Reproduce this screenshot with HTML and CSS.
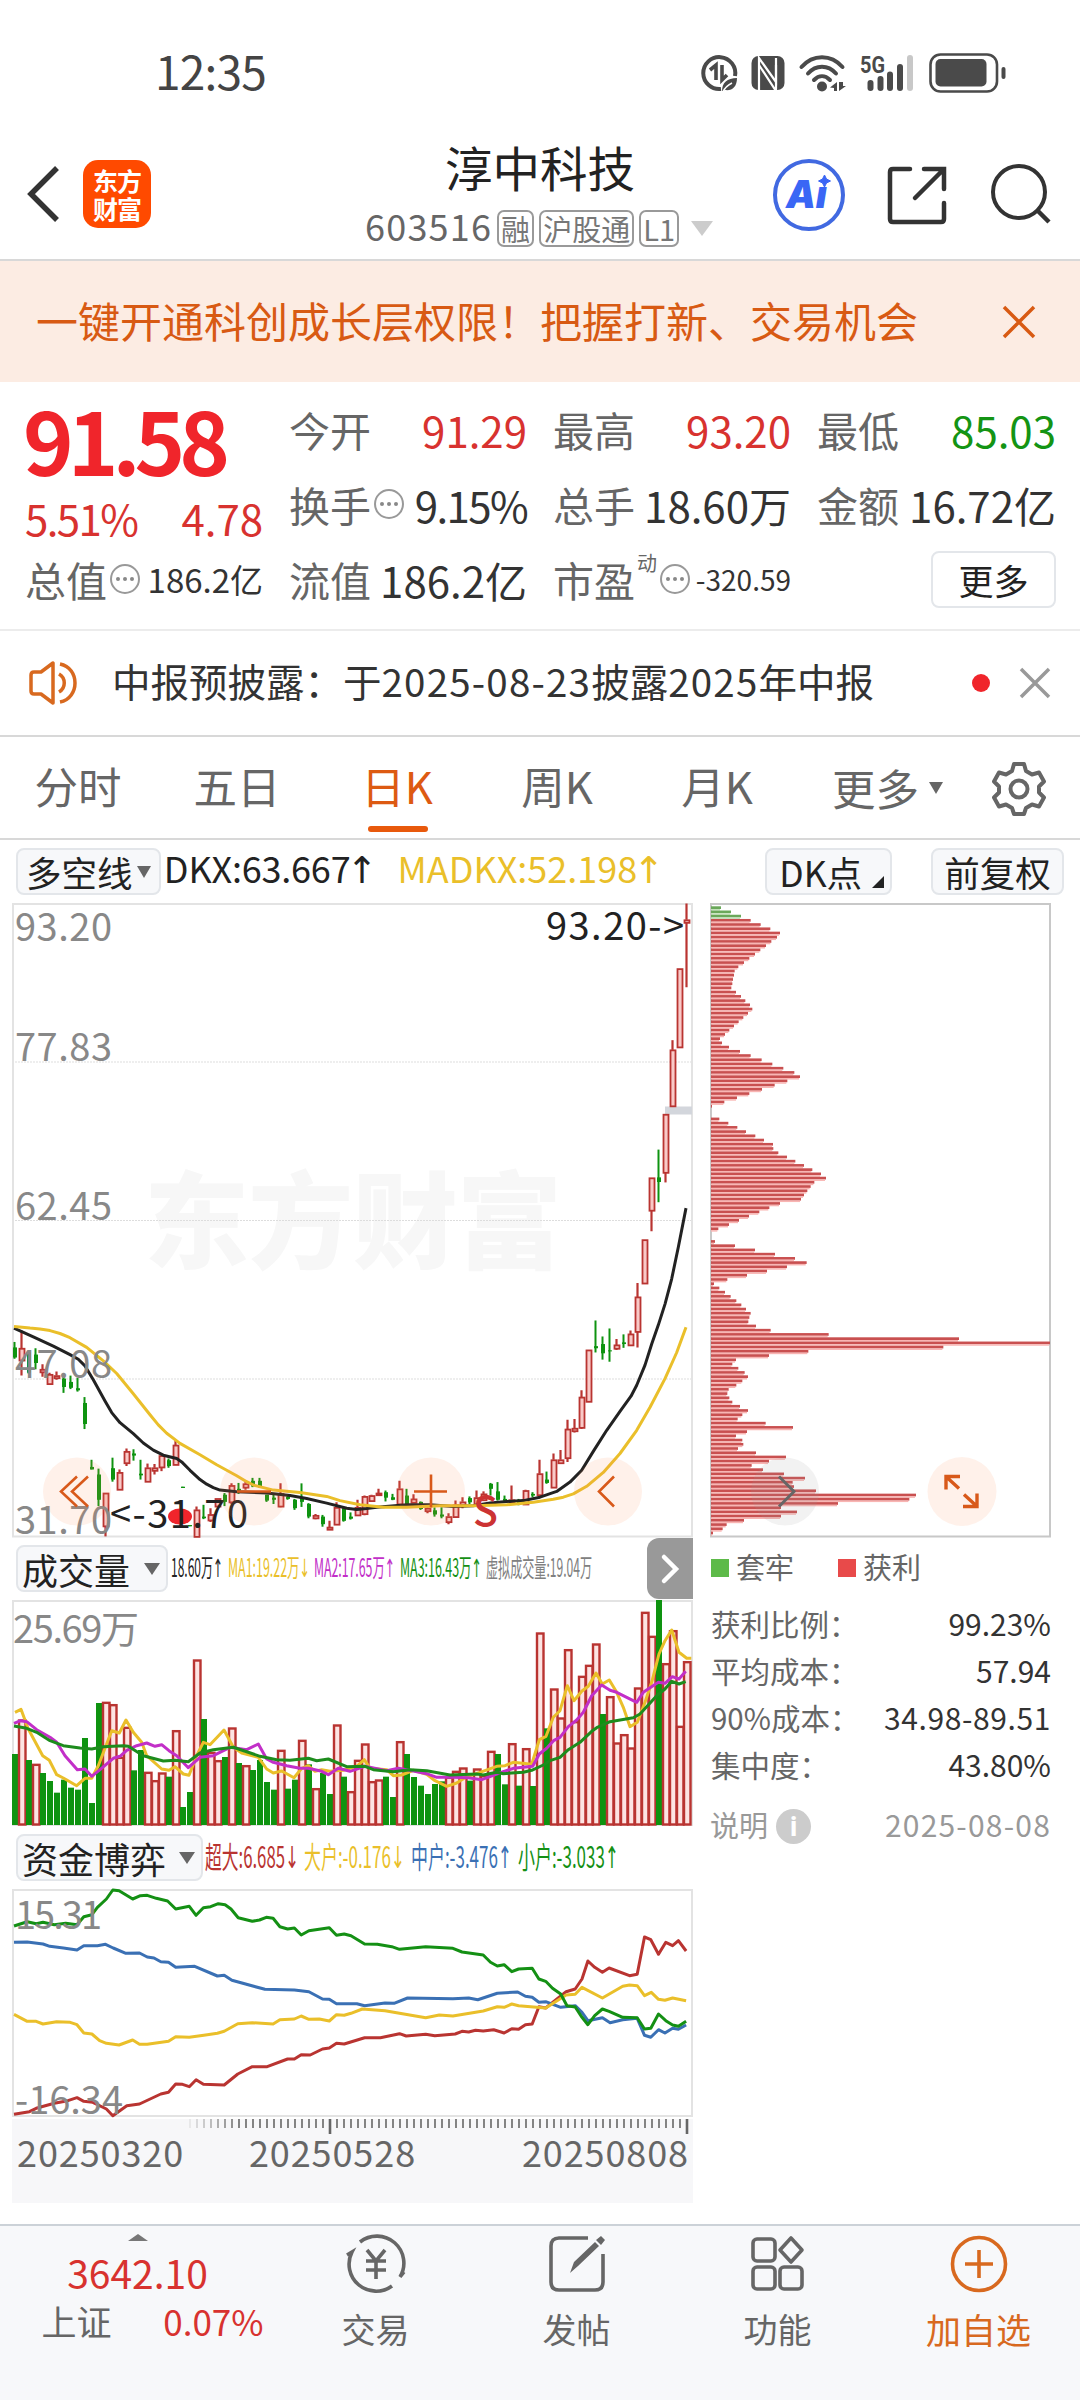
FILE: index.html
```html
<!DOCTYPE html>
<html lang="zh-CN">

<head>
    <meta charset="utf-8">
    <meta name="viewport" content="width=device-width, initial-scale=1.0">
    <title>淳中科技 603516</title>
    <link rel="stylesheet" href="styles.css">
</head>

<body>
    <div class="statusbar">
        <span class="clock">12:35</span>
        <div class="status-icons">
            <svg class="ico-data" width="37" height="37" viewBox="0 0 37 37">
                <path d="M34 21A16 16 0 1 0 20 34" fill="none" stroke="#4a4a4a" stroke-width="4" />
                <path d="M9 15l6-5v15M21 10v15l5-5" fill="none" stroke="#4a4a4a" stroke-width="3.600" />
                <path d="M21 36c0-8 5-13 15-13 0 9-5 13-12 12z" fill="#4a4a4a" />
                <path d="M22 37c2-5 5-7 9-9" fill="none" stroke="#fff" stroke-width="1.600" />
            </svg>
            <svg class="ico-nfc" width="34" height="36" viewBox="0 0 34 36">
                <rect x="0.500" y="1" width="33" height="34" rx="7" fill="#4a4a4a" />
                <path d="M8 35V3l17 24V10" fill="none" stroke="#fff" stroke-width="2.200" />
                <path d="M8 10l17 26V3" fill="none" stroke="#fff" stroke-width="2.200" />
            </svg>
            <svg class="ico-wifi" width="47" height="38" viewBox="0 0 47 38">
                <g fill="none" stroke="#4a4a4a" stroke-width="4" stroke-linecap="round">
                    <path d="M2.500 13C14 0 32 0 43.500 13" />
                    <path d="M9 19.500c8-9 20-9 28 0" />
                    <path d="M15 26c5-5 11-5 16 0" />
                </g>
                <circle cx="23" cy="32.500" r="5" fill="#4a4a4a" />
                <path d="M31 33.500l7-5.500v9h-3v-3zM40 28v9l7-5h-3v-4z" fill="#4a4a4a" />
            </svg>
            <svg class="ico-signal" width="56" height="38" viewBox="0 0 56 38">
                <text class="net" x="0" y="19" textLength="25" lengthAdjust="spacingAndGlyphs">5G</text>
                <g fill="#4a4a4a">
                    <rect x="7.500" y="26" width="6" height="11" rx="3" />
                    <rect x="17.500" y="22" width="6" height="15" rx="3" />
                    <rect x="27" y="17.500" width="6" height="19.500" rx="3" />
                    <rect x="37" y="10" width="6" height="27" rx="3" />
                    <rect x="47" y="1" width="6" height="36" rx="3" fill="#c8c8c8" />
                </g>
            </svg>
            <svg class="ico-battery" width="78" height="40" viewBox="0 0 78 40">
                <rect x="1.500" y="1.500" width="66.500" height="37" rx="10" fill="none" stroke="#4a4a4a" stroke-width="2.600" />
                <rect x="6.500" y="6" width="51" height="27.500" rx="5" fill="#4a4a4a" />
                <rect x="72.500" y="14" width="4" height="12" rx="2" fill="#4a4a4a" />
            </svg>
        </div>
    </div>

    <header class="header">
        <svg class="back" width="36" height="60" viewBox="0 0 36 60">
            <path d="M32 4L6 30l26 26" fill="none" stroke="#333" stroke-width="5.500" />
        </svg>
        <div class="logo"><span>东方</span><span>财富</span></div>
        <div class="title">
            <h1>淳中科技</h1>
            <div class="code">
                <span class="num">603516</span>
                <span class="tag">融</span>
                <span class="tag">沪股通</span>
                <span class="tag">L1</span>
                <i class="tri-down"></i>
            </div>
        </div>
        <svg class="ai" width="74" height="74" viewBox="0 0 74 74">
            <circle cx="37" cy="37" r="34" fill="none" stroke="#4169e1" stroke-width="4" />
            <text class="ai-text" x="14" y="50" textLength="41" lengthAdjust="spacingAndGlyphs">Aı</text>
            <path d="M52.500 17l2 4 4 2-4 2-2 4-2-4-4-2 4-2z" fill="#3a66f5" stroke="#3a66f5" />
        </svg>
        <svg class="share" width="60" height="60" viewBox="0 0 60 60">
            <path d="M23 4H6q-3 0-3 3v47q0 3 3 3h48q3 0 3-3V38M37 4h20v20M56 5L28 33" fill="none" stroke="#333" stroke-width="4.500" stroke-linecap="round" />
        </svg>
        <svg class="search" width="62" height="62" viewBox="0 0 62 62">
            <circle cx="29" cy="29" r="26" fill="none" stroke="#333" stroke-width="4" />
            <path d="M47 47l12 12" stroke="#333" stroke-width="4.500" />
        </svg>
    </header>

    <div class="banner">
        <span>一键开通科创成长层权限！把握打新、交易机会</span>
        <svg width="34" height="34" viewBox="0 0 34 34">
            <path d="M2 2l30 30M32 2L2 32" stroke="#d85a13" stroke-width="3.500" />
        </svg>
    </div>

    <section class="quote">
        <div class="price">
            <div class="last">91.58</div>
            <div class="change"><span class="pct">5.51%</span><span>4.78</span></div>
        </div>
        <div class="cell"><b>今开</b><em class="up">91.29</em></div>
        <div class="cell"><b>最高</b><em class="up">93.20</em></div>
        <div class="cell"><b>最低</b><em class="down">85.03</em></div>
        <div class="cell"><b>换手</b><i class="dots"></i><em class="pct">9.15%</em></div>
        <div class="cell"><b>总手</b><em>18.60万</em></div>
        <div class="cell"><b>金额</b><em>16.72亿</em></div>
        <div class="cell"><b>总值</b><i class="dots"></i><em class="mid">186.2亿</em></div>
        <div class="cell"><b>流值</b><em>186.2亿</em></div>
        <div class="cell"><b>市盈</b><sup>动</sup><i class="dots"></i><em class="small">-320.59</em></div>
        <div class="cell"><button class="more">更多</button></div>
    </section>

    <div class="notice">
        <svg width="54" height="46" viewBox="0 0 54 46">
            <g fill="none" stroke="#d8691f" stroke-width="3.500" stroke-linejoin="round">
                <path d="M25 3v40L13 34H6q-3 0-3-3V15q0-3 3-3h7z" />
                <path d="M31 14c7 4 7 14 0 18M32 4c20 4 20 34 0 38" />
            </g>
        </svg>
        <p>中报预披露：于<span>2025-08-23</span>披露<span>2025</span>年中报</p>
        <i class="dot"></i>
        <svg width="30" height="30" viewBox="0 0 30 30">
            <path d="M1 1l28 28M29 1L1 29" stroke="#999" stroke-width="3.500" />
        </svg>
    </div>

    <nav class="tabs">
        <a>分时</a>
        <a>五日</a>
        <a class="active">日K</a>
        <a>周K</a>
        <a>月K</a>
        <a class="tab-more">更多<i class="tri-down"></i></a>
        <svg width="56" height="56" viewBox="0 0 56 56">
            <path d="M23 4h10l2 7 6 3.500 7-2 5 9-5 5v6l5 5-5 9-7-2-6 3.500-2 6H23l-2-6-6-3.500-7 2-5-9 5-5v-6l-5-5 5-9 7 2 6-3.500z" fill="none" stroke="#666" stroke-width="4" stroke-linejoin="round" />
            <circle cx="28" cy="29" r="8.500" fill="none" stroke="#666" stroke-width="4" />
        </svg>
    </nav>

    <div class="indicator">
        <button class="pick">多空线<i class="tri-down"></i></button>
        <span class="dkx">DKX:63.667<s>↑</s></span>
        <span class="madkx">MADKX:52.198<s>↑</s></span>
        <button class="dk">DK点<i class="corner"></i></button>
        <button class="fq">前复权</button>
    </div>

    <main class="charts">
        <div class="left">
            <svg id="kline" class="pane" width="681" height="634" viewBox="12 903.500 681 634"></svg>
            <div class="sub">
                <button class="pick">成交量<i class="tri-down"></i></button>
                <svg width="430" height="40" viewBox="170 1550 430 40" class="values vol-values">
                    <text x="173" y="1578" textLength="52" lengthAdjust="spacingAndGlyphs" fill="#222">18.60万<tspan class="arrow">↑</tspan></text>
                    <text x="230" y="1578" textLength="82" lengthAdjust="spacingAndGlyphs" fill="#eabf2a">MA1:19.22万<tspan class="arrow">↓</tspan></text>
                    <text x="316" y="1578" textLength="81" lengthAdjust="spacingAndGlyphs" fill="#c22fc8">MA2:17.65万<tspan class="arrow">↑</tspan></text>
                    <text x="402" y="1578" textLength="82" lengthAdjust="spacingAndGlyphs" fill="#149014">MA3:16.43万<tspan class="arrow">↑</tspan></text>
                    <text x="488" y="1578" textLength="106" lengthAdjust="spacingAndGlyphs" fill="#808080">虚拟成交量:19.04万</text>
                </svg>
                <div class="next">
                    <svg width="20" height="32" viewBox="0 0 20 32">
                        <path d="M4 4l12 12L4 28" fill="none" stroke="#fff" stroke-width="4.500" stroke-linecap="round" />
                    </svg>
                </div>
            </div>
            <svg id="volume" class="pane" width="681" height="226" viewBox="12 1601 681 226"></svg>
            <div class="sub">
                <button class="pick">资金博弈<i class="tri-down"></i></button>
                <svg width="430" height="44" viewBox="203 1838 430 44" class="values fund-values">
                    <text x="206" y="1870" textLength="94" lengthAdjust="spacingAndGlyphs" fill="#b93431">超大:6.685<tspan class="arrow">↓</tspan></text>
                    <text x="305" y="1870" textLength="101" lengthAdjust="spacingAndGlyphs" fill="#eabf2a">大户:-0.176<tspan class="arrow">↓</tspan></text>
                    <text x="412" y="1870" textLength="101" lengthAdjust="spacingAndGlyphs" fill="#3a70b4">中户:-3.476<tspan class="arrow">↑</tspan></text>
                    <text x="519" y="1870" textLength="101" lengthAdjust="spacingAndGlyphs" fill="#149014">小户:-3.033<tspan class="arrow">↑</tspan></text>
                </svg>
            </div>
            <svg id="fund" class="pane" width="681" height="228" viewBox="12 1890 681 228"></svg>
            <div class="axis">
                <svg id="ticks" width="681" height="18" viewBox="12 2120 681 18"></svg>
                <div class="dates"><span>20250320</span><span>20250528</span><span>20250808</span></div>
            </div>
        </div>

        <aside class="right">
            <svg id="chips" class="pane" width="342" height="634" viewBox="710 903.500 342 634"></svg>
            <div class="legend">
                <span><i class="sq green"></i>套牢</span>
                <span><i class="sq red"></i>获利</span>
            </div>
            <dl class="stats">
                <div><dt>获利比例：</dt><dd>99.23%</dd></div>
                <div><dt>平均成本：</dt><dd>57.94</dd></div>
                <div><dt>90%成本：</dt><dd class="range">34.98-89.51</dd></div>
                <div><dt>集中度：</dt><dd>43.80%</dd></div>
            </dl>
            <div class="explain">
                <span>说明</span><i class="info">i</i><time>2025-08-08</time>
            </div>
        </aside>
    </main>

    <footer class="toolbar">
        <div class="index">
            <i class="tri-up"></i>
            <strong>3642.10</strong>
            <p><span>上证</span><em>0.07%</em></p>
        </div>
        <div class="item">
            <svg width="66" height="60" viewBox="0 0 66 60">
                <g fill="none" stroke="#666" stroke-width="3.600">
                    <path d="M17 8A27 27 0 0 1 57 43l4-5M49 52A27 27 0 0 1 9 18l-5 3" />
                    <path d="M24 16l9 11 9-11M23 27h20M23 36h20M33 27v18" />
                </g>
            </svg>
            <span>交易</span>
        </div>
        <div class="item">
            <svg width="58" height="60" viewBox="0 0 58 60">
                <path d="M40 4H11Q3 4 3 12v36q0 8 8 8h36q8 0 8-8V20" fill="none" stroke="#666" stroke-width="3.600" />
                <path d="M22 39l4-11 21-20 4 4-21 20zM48 6l5-4 4 4-4 5z" fill="#666" />
            </svg>
            <span>发帖</span>
        </div>
        <div class="item">
            <svg width="56" height="60" viewBox="0 0 56 60">
                <g fill="none" stroke="#666" stroke-width="3.600">
                    <rect x="3" y="5" width="22" height="22" rx="4" />
                    <rect x="3" y="33" width="22" height="22" rx="4" />
                    <rect x="30" y="33" width="22" height="22" rx="4" />
                    <path d="M41 4l11 12-11 12-11-12z" stroke-linejoin="round" />
                </g>
            </svg>
            <span>功能</span>
        </div>
        <div class="item add">
            <svg width="60" height="60" viewBox="0 0 60 60">
                <circle cx="30" cy="30" r="26.500" fill="none" stroke="#d8691f" stroke-width="3.600" />
                <path d="M30 16v28M16 30h28" stroke="#d8691f" stroke-width="3.600" />
            </svg>
            <span>加自选</span>
        </div>
    </footer>

    <script src="charts.js"></script>
</body>

</html>
```

FILE: styles.css
```css
/****GENERAL****/

* {
    box-sizing: border-box;
}

body {
    margin: 0;
    width: 1080px;
    height: 2400px;
    display: flex;
    flex-direction: column;
    overflow: hidden;
    background-color: #fff;
    color: #333;
    font-family: "Noto Sans CJK SC", "Noto Sans", sans-serif;
}

h1,
p,
dl,
dd {
    margin: 0;
}

i,
em {
    font-style: normal;
}

s {
    text-decoration: none;
}

svg {
    display: block;
    flex: none;
    overflow: visible;
}

button {
    font-family: inherit;
    padding: 0;
    color: #222;
    background-color: #f7f8fa;
    border: 2px solid #e3e6ea;
    border-radius: 8px;
    white-space: nowrap;
}

.tri-down {
    border: 7px solid transparent;
    border-top: 12px solid #666;
    border-bottom: 0;
}

/****STATUS BAR****/

.statusbar {
    height: 140px;
    display: flex;
    justify-content: space-between;
    align-items: flex-start;
    padding: 40px 73px 0 155px;
}

.clock {
    font-size: 46px;
    line-height: 60px;
    letter-spacing: -0.8px;
    color: #444;
}

.status-icons {
    display: flex;
    align-items: center;
    padding-top: 13px;
}

.ico-nfc {
    margin-left: 13px;
}

.ico-wifi {
    margin-left: 14px;
}

.ico-signal {
    margin-left: 14px;
}

.ico-battery {
    margin-left: 13px;
}

.net {
    font: 700 24px Roboto, sans-serif;
    fill: #4a4a4a;
}

/****HEADER****/

.header {
    height: 121px;
    display: flex;
    align-items: flex-start;
    border-bottom: 2px solid #d8d8d8;
    padding-left: 25px;
}

.back {
    margin-top: 24px;
}

.logo {
    width: 68px;
    height: 68px;
    margin: 20px 1px 0 22px;
    border-radius: 15px;
    background-color: #ff4a00;
    color: #fff;
    font-size: 25px;
    font-weight: 700;
    line-height: 28px;
    letter-spacing: -1px;
    display: flex;
    flex-direction: column;
    align-items: center;
    justify-content: center;
}

.title {
    width: 420px;
    margin-left: 178px;
    display: flex;
    flex-direction: column;
    align-items: center;
}

.title h1 {
    font-size: 47.500px;
    font-weight: 400;
    line-height: 54px;
    color: #222;
}

.code {
    display: flex;
    align-items: center;
    height: 40px;
    margin-top: 14px;
    margin-left: -2px;
    font-size: 36px;
    color: #666;
}

.code .num {
    margin-right: 5px;
    line-height: 40px;
    letter-spacing: 1.2px;
    margin-top: -6px;
}

.tag {
    font-size: 29px;
    line-height: 32px;
    height: 37px;
    padding: 0 2px;
    margin-right: 5px;
    border: 2px solid #999;
    border-radius: 7px;
    color: #777;
}

.code .tri-down {
    border-width: 15px 11px 0;
    border-top-color: #ccc;
    margin-left: 7px;
}

.ai {
    margin: 18px 0 0 22px;
}

.ai-text {
    font: italic 900 38px Inter, "Noto Sans", sans-serif;
    fill: #3a66f5;
}

.share {
    margin: 25px 0 0 41px;
}

.search {
    margin: 23px 0 0 43px;
}

/****BANNER****/

.banner {
    height: 121px;
    display: flex;
    align-items: center;
    justify-content: space-between;
    padding: 0 44px 0 36px;
    background-color: #fcece3;
    color: #d85a13;
    font-size: 42px;
    line-height: 56px;
}

.banner span {
    margin-top: -4px;
}

/****QUOTE****/

.quote {
    height: 249px;
    display: grid;
    grid-template-columns: 238px 238px 238px 239px;
    grid-template-rows: 75px 75px 75px;
    column-gap: 26px;
    padding: 10px 24px 0 25px;
    border-bottom: 2px solid #ececec;
}

.price {
    grid-row: span 2;
    color: #d8322f;
}

.last {
    font-size: 86px;
    font-weight: 700;
    line-height: 94px;
    letter-spacing: -6px;
    margin-left: -2px;
    color: #f0252b;
}

.change {
    display: flex;
    justify-content: space-between;
    margin-top: 7px;
    font-size: 42px;
    line-height: 50px;
}

.pct {
    letter-spacing: -1.600px;
}

.cell {
    display: flex;
    align-items: center;
    font-size: 42px;
    line-height: 75px;
    white-space: nowrap;
}

.cell b {
    font-weight: 400;
    font-size: 41px;
    color: #666;
}

.cell em {
    margin-left: auto;
}

.cell em.up {
    color: #d8322f;
}

.cell em.down {
    color: #149414;
}

.cell em.mid {
    font-size: 33px;
}

.cell em.small {
    font-size: 28px;
}

.cell sup {
    font-size: 20px;
    line-height: 20px;
    color: #666;
    margin: -34px 0 0 2px;
}

.dots {
    display: flex;
    align-items: center;
    justify-content: center;
    width: 30px;
    height: 30px;
    margin: -2px 0 0 3px;
    border: 2px solid #999;
    border-radius: 50%;
}

.dots::before {
    content: "";
    width: 4px;
    height: 4px;
    border-radius: 50%;
    background-color: #888;
    box-shadow: -7px 0 #888, 7px 0 #888;
}

.more {
    width: 125px;
    height: 57px;
    margin-left: auto;
    font-size: 35px;
    line-height: 48px;
    background-color: #fff;
}

/****NOTICE****/

.notice {
    height: 106px;
    display: flex;
    align-items: center;
    padding-left: 28px;
    border-bottom: 2px solid #d8d8d8;
}

.notice p {
    width: 858px;
    margin-top: -6px;
    padding-left: 30px;
    font-size: 38.500px;
    white-space: nowrap;
}

.notice p span {
    letter-spacing: 1.200px;
}

.dot {
    width: 18px;
    height: 18px;
    margin: 0 30px 0 32px;
    border-radius: 50%;
    background-color: #f0252b;
}

/****TABS****/

.tabs {
    height: 103px;
    display: flex;
    align-items: center;
    border-bottom: 2px solid #d8d8d8;
}

.tabs a {
    position: relative;
    width: 160px;
    height: 102px;
    text-align: center;
    font-size: 43.500px;
    line-height: 97px;
    color: #666;
}

.tabs a:first-child {
    width: 157px;
    padding-right: 1px;
}

.tabs .active {
    color: #dd5a12;
}

.tabs .active::after {
    content: "";
    position: absolute;
    left: 51px;
    bottom: 7px;
    width: 60px;
    height: 6px;
    border-radius: 3px;
    background-color: #e8590c;
}

.tabs .tab-more {
    width: 194px;
    display: flex;
    align-items: center;
    padding-left: 35px;
}

.tab-more .tri-down {
    margin-left: 10px;
}

/****INDICATOR ROW****/

.indicator {
    height: 63px;
    display: flex;
    align-items: center;
    padding: 0 16px 0;
    font-size: 36px;
    line-height: 46px;
    white-space: nowrap;
}

.indicator button {
    height: 47px;
    font-size: 35.500px;
    line-height: 38px;
}

.pick {
    display: flex;
    align-items: center;
}

.indicator .pick {
    width: 145px;
    padding-left: 8px;
}

.indicator .pick i {
    margin-left: 4px;
}

.indicator s,
.arrow {
    font-family: "DejaVu Sans", sans-serif;
}

.indicator s {
    margin: 0 -4px;
    font-size: 37px;
}

.dkx,
.madkx {
    margin-top: -6px;
}

.dkx {
    width: 234px;
    margin-left: 3px;
    color: #222;
    letter-spacing: -0.2px;
}

.madkx {
    width: 291px;
    color: #eabf2a;
}

.indicator .dk {
    width: 127px;
    margin-left: 77px;
    display: flex;
    align-items: center;
    padding-left: 12px;
}

.corner {
    align-self: flex-end;
    margin: 0 0 5px 10px;
    border-left: 12px solid transparent;
    border-bottom: 12px solid #222;
}

.indicator .fq {
    width: 133px;
    margin-left: 39px;
}

/****CHARTS****/

.charts {
    display: flex;
    height: 1321px;
    padding-left: 12px;
}

.left {
    width: 681px;
}

.right {
    width: 342px;
    margin-left: 17px;
}

.sub {
    height: 63px;
    display: flex;
    align-items: center;
    padding-left: 4px;
}

.sub .pick {
    height: 47px;
    width: 152px;
    padding-left: 4px;
    font-size: 36px;
    line-height: 38px;
}

.sub .pick i {
    margin-left: 14px;
    border-left-width: 8px;
    border-right-width: 8px;
}

.sub:nth-of-type(2) .pick {
    width: 187px;
}

.sub:nth-of-type(2) .pick i {
    margin-left: 13px;
}

.values {
    font-size: 25px;
}

.fund-values {
    margin-left: -1px;
    font-size: 30px;
}

.next {
    width: 46px;
    height: 61px;
    margin-left: 49px;
    border-radius: 12px 0 0 12px;
    background-color: #999;
    display: flex;
    align-items: center;
    justify-content: center;
}

.scale {
    font-size: 38px;
    fill: #888;
}

.mark {
    font-size: 38px;
    fill: #222;
}

.watermark {
    font-size: 105px;
    font-weight: 900;
    fill: #f7f7f7;
}

.axis {
    height: 84px;
    margin-top: 2px;
    background-color: #f7f7f9;
}

.dates {
    display: flex;
    justify-content: space-between;
    padding: 0 4px 0 5px;
    font-size: 36px;
    line-height: 50px;
    letter-spacing: 0.9px;
    margin-top: -11px;
    color: #666;
}

.dates span:nth-child(2) {
    margin-right: 41px;
}

/****CHIP STATS****/

.legend {
    display: flex;
    gap: 34px;
    height: 58px;
    font-size: 29px;
    line-height: 54px;
    white-space: nowrap;
    color: #666;
}

.legend span {
    display: flex;
    align-items: center;
    width: 93px;
}

.sq {
    width: 18px;
    height: 18px;
    margin: 4px 7px 0 1px;
}

.sq.green {
    background-color: #5dba48;
}

.sq.red {
    background-color: #e84a4a;
}

.stats {
    padding-top: 5px;
    font-size: 30px;
}

.stats div {
    display: flex;
    justify-content: space-between;
    height: 47px;
    line-height: 47px;
    padding-right: 1px;
}

.stats dt {
    color: #666;
    font-size: 29.500px;
    padding-left: 1px;
}

.stats .range {
    letter-spacing: 0.6px;
}

.explain {
    display: flex;
    align-items: center;
    height: 50px;
    margin-top: 11px;
    padding-right: 1px;
    font-size: 29px;
    color: #999;
}

.info {
    width: 35px;
    height: 35px;
    margin: 4px 0 0 8px;
    border-radius: 50%;
    background-color: #ccc;
    color: #fff;
    font: 700 27px/34px "Open Sans", sans-serif;
    text-align: center;
}

.explain time {
    margin-left: auto;
    font-size: 30px;
    letter-spacing: 1.2px;
}

/****TOOLBAR****/

.toolbar {
    flex: 1;
    display: flex;
    border-top: 2px solid #ccd2d8;
    background-color: #f7f8fa;
    color: #666;
    font-size: 34px;
}

.index {
    width: 275px;
    display: flex;
    flex-direction: column;
    align-items: center;
    padding-top: 8px;
    color: #d8322f;
}

.tri-up {
    border: 10px solid transparent;
    border-bottom: 7px solid #777;
    border-top: 0;
}

.index strong {
    font-size: 39px;
    font-weight: 400;
    line-height: 50px;
    margin-top: 6px;
}

.index p {
    width: 222px;
    margin-left: 30px;
    margin-top: -1px;
    display: flex;
    justify-content: space-between;
    font-size: 35px;
    line-height: 50px;
}

.index span {
    color: #666;
}

.item {
    width: 201px;
    display: flex;
    flex-direction: column;
    align-items: center;
    padding-top: 8px;
    line-height: 50px;
}

.item span {
    margin-top: 10px;
}

.add {
    font-size: 35px;
    color: #d8691f;
}
```

FILE: charts.js
```js
const RED = "#b93431";
const GREEN = "#0e9310";
const YELLOW = "#eabf2a";

// first bar sits at x = 15, one bar every 7px
const barX = i => 15 + 7 * i;

// daily bars: colour, high, open/close top, open/close bottom, low
const candles = `g1075 1088 1112 1115,r1048 1090 1118 1155,g1098 1100 1148 1150,g1090 1105 1125 1140,r1128 1140 1146 1158,r1148 1152 1174 1177,r1145 1155 1160 1165,g1158 1162 1182 1196,g1155 1170 1184 1187,g1160 1185 1190 1193,g1206 1220 1270 1282,g1355 1372 1378 1378,g1376 1390 1450 1465,r1434 1434 1512 1537,g1350 1375 1402 1407,r1378 1385 1425 1425,r1328 1335 1362 1370,g1330 1340 1345 1357,g1355 1388 1392 1402,r1364 1374 1406 1406,r1365 1374 1380 1390,r1345 1345 1372 1382,g1352 1356 1370 1374,r1308 1320 1366 1366,g1419 1419 1422 1422,g1510 1510 1513 1513,r1466 1474 1537 1537,g1462 1490 1494 1496,r1470 1485 1498 1503,r1447 1447 1465 1465,g1434 1438 1455 1465,r1411 1416 1455 1460,g1410 1424 1428 1436,r1403 1412 1420 1426,g1398 1405 1418 1420,g1398 1405 1418 1422,g1438 1438 1452 1455,g1435 1445 1450 1460,r1411 1435 1465 1468,g1440 1443 1448 1450,g1448 1450 1470 1474,g1411 1445 1455 1467,g1458 1460 1490 1494,r1484 1487 1493 1496,g1486 1490 1508 1514,r1500 1515 1520 1522,r1456 1468 1508 1510,g1468 1470 1500 1502,g1480 1490 1495 1497,r1450 1468 1486 1488,r1440 1442 1483 1487,r1438 1440 1452 1453,r1424 1434 1438 1440,g1428 1432 1445 1454,g1436 1444 1450 1451,r1405 1424 1460 1461,g1424 1440 1460 1462,r1437 1448 1456 1457,g1454 1455 1472 1474,r1468 1470 1476 1482,g1468 1475 1485 1490,g1468 1485 1490 1494,r1482 1490 1502 1508,r1452 1462 1490 1492,r1444 1455 1462 1470,g1442 1446 1456 1460,r1428 1445 1460 1461,r1430 1436 1450 1450,g1410 1412 1424 1440,g1408 1430 1450 1452,g1440 1448 1452 1453,r1416 1450 1455 1456,g1448 1455 1460 1463,r1426 1428 1460 1462,g1432 1436 1440 1444,r1355 1388 1438 1440,g1383 1402 1410 1412,r1340 1355 1420 1421,r1332 1355 1362 1364,r1260 1282 1350 1360,r1258 1280 1286 1290,r1190 1206 1278 1282,r1094 1094 1216 1218,g1024 1085 1090 1100,g1062 1080 1102 1117,g1043 1095 1097 1122,r1068 1082 1090 1094,g1057 1076 1080 1089,r1048 1056 1082 1084,r935 968 1050 1088,r832 832 935 935,r685 685 762 812,g618 684 695 743,r534 534 672 696,r358 381 514 514,r188 188 374 374,r33 72 78 232`.split(",");

const volumes = "g675 r573 g693 r706 g732 g756 g791 g752 g776 g782 g627 g822 g522 r520 r527 r685 r595 g724 g663 r730 r755 r732 g743 r605 g834 g789 r393 g570 r670 r695 g684 r597 g702 r710 g723 g693 g759 g782 r664 g779 g752 r634 g706 r779 g732 g795 r588 g743 r788 r694 r645 r758 r753 g743 g804 r638 g675 g744 g770 g795 g765 g757 r745 r727 r717 g755 r720 r740 r667 g675 g766 r644 g770 r659 g771 r312 g598 r480 r567 r362 r578 r442 r409 r345 g555 r503 r642 r617 r657 r477 r250 r322 g213 r404 r305 r592 r398".split(" ");

const chips = [30, 60, 90, 119, 149, 178, 207, 198, 181, 165, 148, 132, 115, 99, 82, 71, 69, 66, 64, 61, 75, 90, 103, 117, 124, 111, 97, 83, 69, 55, 42, 27, 33, 54, 87, 119, 152, 184, 217, 250, 267, 229, 191, 153, 115, 78, 40, 3, 0, 0, 25, 52, 79, 105, 133, 159, 186, 187, 202, 228, 253, 279, 304, 330, 345, 310, 299, 289, 279, 270, 207, 175, 145, 114, 84, 54, 22, 0, 0, 12, 72, 132, 192, 252, 287, 228, 168, 108, 49, 9, 25, 42, 59, 76, 91, 105, 119, 115, 112, 135, 179, 353, 744, 1017, 697, 292, 174, 75, 64, 82, 101, 111, 94, 76, 53, 49, 55, 64, 87, 111, 94, 80, 164, 246, 108, 75, 94, 97, 81, 135, 225, 174, 122, 156, 219, 282, 245, 249, 315, 615, 595, 381, 210, 258, 210, 99, 47, 35, 6];

// y scales of the panes
const priceY = v => 890 + v / 2.376;
const volY = v => 1530 + v / 3;
const fundY = v => 1830 + v / 3;

const byId = id => document.getElementById(id);

function path(points, fx, fy) {
    return points.trim().split(/\s+/).map((p, i) => {
        const [x, y] = p.split(",").map(Number);
        return (i ? "L" : "M") + fx(x).toFixed(1) + " " + fy(y).toFixed(1);
    }).join("");
}

function line(points, color, fx, fy, width = 3) {
    return `<path d="${path(points, fx, fy)}" fill="none" stroke="${color}" stroke-width="${width}" stroke-linejoin="round"/>`;
}

function drawKline() {
    let s = `<text class="watermark" x="144" y="1260" textLength="418">东方财富</text>`;
    [1062.5, 1221, 1379.5].forEach(y => {
        s += `<path d="M12 ${y}H692" stroke="#ddd" stroke-dasharray="2 1"/>`;
    });
    s += `<path d="M13 904.500H692V1537H13z" fill="none" stroke="#e3e3e3" stroke-width="2"/>`;
    s += `<rect x="665" y="1107" width="27" height="8" fill="#d3d6dc"/>`;

    candles.forEach((c, i) => {
        const [hi, top, bottom, low] = c.slice(1).split(" ").map(v => priceY(+v));
        const x = barX(i);
        const h = Math.max(bottom - top, 1);
        if (c[0] === "g") {
            s += `<path d="M${x - 0.5} ${hi}V${low}" stroke="${GREEN}" stroke-width="2"/>`;
            s += `<rect x="${x - 2}" y="${top}" width="4" height="${h}" fill="${GREEN}"/>`;
        } else {
            s += `<path d="M${x - 0.5} ${hi}V${top}M${x - 0.5} ${bottom}V${low}" stroke="${RED}" stroke-width="2.200"/>`;
            s += `<rect x="${x - 2.5}" y="${top + 0.5}" width="5" height="${h}" fill="#f9c9c7" stroke="${RED}" stroke-width="1.800"/>`;
        }
    });

    // dkx and madkx, x in thirds of a pixel
    const third = x => x / 3;
    s += line(`42,1042 100,1063 160,1085 210,1105 235,1116 255,1132 280,1165 315,1215 335,1243 360,1267 400,1293 430,1315 460,1332 490,1344 530,1352 545,1360 570,1380 600,1402 620,1413 640,1421 660,1427 710,1431 800,1434 870,1440 920,1447 980,1458 1040,1470 1070,1473 1100,1471 1130,1468 1220,1462 1290,1462 1360,1466 1420,1464 1470,1458 1520,1454 1570,1452 1620,1444 1670,1430 1710,1408 1745,1380 1780,1335 1820,1285 1860,1240 1893,1204 1910,1178 1935,1130 1955,1080 1975,1035 1995,985 2015,925 2035,850 2058,757`, "#222", third, priceY);
    s += line(`42,1038 90,1042 120,1044 150,1048 180,1055 210,1065 260,1088 310,1120 350,1150 400,1198 450,1248 475,1272 500,1292 540,1316 600,1343 650,1367 710,1393 740,1407 760,1415 820,1427 900,1433 980,1442 1020,1452 1080,1462 1150,1468 1220,1468 1320,1464 1420,1464 1520,1462 1600,1456 1660,1449 1690,1444 1720,1436 1760,1418 1810,1385 1860,1340 1910,1285 1950,1230 1995,1162 2030,1100 2058,1040`, YELLOW, third, priceY);

    ["93.20,941", "77.83,1061", "62.45,1220", "47.08,1378", "31.70,1534"].forEach(l => {
        const [t, y] = l.split(",");
        s += `<text class="scale" x="15" y="${y}" textLength="97">${t}</text>`;
    });

    s += `<ellipse cx="180" cy="1517" rx="12" ry="8" fill="#f0252b"/>`;
    s += `<text class="mark" x="110" y="1528" textLength="138">&lt;-31.70</text>`;
    s += `<text class="mark" x="546" y="940" textLength="138">93.20-&gt;</text>`;
    s += `<text x="473" y="1526" font-size="41" font-weight="500" fill="#c33">S</text>`;

    // zoom and scroll buttons
    [77, 254, 431, 608].forEach(x => {
        s += `<circle cx="${x}" cy="1492" r="34" fill="#fb8c50" fill-opacity="0.120"/>`;
    });
    s += `<path d="M77 1477l-16 15 16 15M88 1477l-16 15 16 15M237 1492h34M414 1492h33M431 1475v33M614 1477l-15 15 15 15" fill="none" stroke="#d8591a" stroke-width="2.600"/>`;
    byId("kline").innerHTML = s;
}

function drawVolume() {
    let s = `<path d="M13 1602H692V1826H13z" fill="none" stroke="#e3e3e3" stroke-width="2"/>`;
    volumes.forEach((v, i) => {
        const y = volY(+v.slice(1));
        const x = barX(i);
        if (v[0] === "g") {
            s += `<rect x="${x - 3}" y="${y}" width="6" height="${1826 - y}" fill="${GREEN}"/>`;
        } else {
            s += `<rect x="${x - 3}" y="${y + 0.5}" width="6.500" height="${1825 - y}" fill="#fde4e3" stroke="${RED}" stroke-width="2.400"/>`;
        }
    });
    const third = x => x / 3;
    s += line(`45,550 63,541 85,600 128,680 148,694 170,737 190,747 230,770 255,748 275,748 295,710 335,605 358,612 378,573 400,610 425,640 440,680 485,720 507,724 525,713 550,735 567,739 590,680 610,640 630,647 672,603 700,655 725,672 775,685 800,720 820,732 845,726 882,746 905,718 925,710 945,727 965,722 990,727 1030,724 1070,712 1093,692 1110,718 1160,722 1180,740 1205,738 1240,724 1280,736 1305,755 1340,772 1370,762 1395,746 1440,730 1490,712 1515,710 1540,700 1595,706 1618,632 1638,622 1660,565 1680,545 1702,470 1722,515 1745,487 1765,472 1788,432 1807,465 1828,453 1850,490 1870,535 1890,593 1912,580 1935,520 1955,460 1977,375 1995,335 2015,303 2037,370 2060,388 2074,388`, YELLOW, third, volY);
    s += line(`42,583 62,575 80,578 110,602 150,625 170,640 195,680 232,722 255,720 275,742 300,722 340,688 360,682 380,664 410,650 440,642 465,652 485,647 507,665 530,680 565,716 600,685 640,680 690,655 740,662 775,645 800,690 820,700 860,710 900,718 925,718 965,727 985,737 1015,718 1050,727 1095,712 1160,725 1195,718 1240,726 1280,734 1310,745 1360,745 1405,746 1445,752 1490,735 1540,718 1598,712 1618,675 1640,658 1662,634 1680,625 1705,593 1730,573 1750,550 1775,500 1805,468 1830,484 1850,490 1910,520 1930,490 1975,460 1995,463 2017,443 2037,450 2057,427`, "#c22fc8", third, volY);
    s += line(`42,591 80,598 110,610 150,635 190,650 240,657 275,660 310,653 370,650 385,652 430,680 490,696 525,694 565,698 600,672 640,662 700,655 740,668 780,682 830,692 870,694 925,688 950,695 985,690 1040,713 1095,712 1120,722 1180,728 1230,722 1280,725 1350,738 1430,735 1450,738 1490,730 1510,734 1570,730 1595,724 1630,708 1650,695 1680,685 1705,662 1740,640 1775,607 1790,596 1830,578 1900,566 1920,555 1970,500 1995,480 2015,457 2037,465 2057,458`, "#1d8c1d", third, volY);
    s += `<text class="scale" x="13" y="1644" textLength="126">25.69万</text>`;
    byId("volume").innerHTML = s;
}

function drawFund() {
    const fx = x => x / 2.208;
    let s = `<path d="M13 1891H692V2117H13z" fill="none" stroke="#e3e3e3" stroke-width="2"/>`;
    s += line(`31,856 65,848 80,838 120,823 150,815 170,806 185,817 205,820 235,840 249,860 280,830 308,825 355,795 372,790 388,765 403,766 418,773 433,752 449,766 495,768 525,735 557,713 590,713 635,690 650,690 665,677 685,678 712,660 727,657 743,643 760,645 805,626 840,626 882,614 897,621 940,616 960,620 1005,615 1020,607 1035,609 1050,604 1067,606 1090,602 1113,612 1130,599 1145,601 1160,587 1175,585 1190,533 1205,537 1250,488 1270,480 1285,450 1298,396 1313,415 1330,430 1345,417 1390,440 1407,436 1423,324 1437,332 1454,376 1470,340 1485,350 1498,335 1515,366`, RED, fx, fundY);
    s += line(`31,340 60,339 95,345 110,352 140,357 170,363 185,350 215,350 233,346 250,357 278,373 308,372 325,384 340,387 355,398 372,400 388,415 430,412 480,441 495,439 512,454 585,481 650,483 682,488 712,510 727,511 743,524 788,524 805,530 850,522 870,523 900,507 1000,509 1035,507 1055,512 1098,493 1143,489 1160,502 1175,505 1190,520 1205,518 1238,535 1270,530 1285,550 1298,575 1330,566 1347,581 1375,572 1407,568 1423,619 1437,625 1454,602 1468,612 1485,598 1498,601 1515,588`, "#3a70b4", fx, fundY);
    s += line(`31,556 60,577 80,577 95,585 125,578 155,580 170,587 185,612 203,615 220,635 235,643 263,648 293,633 308,646 325,646 372,637 388,623 418,625 450,619 480,613 495,607 525,584 557,581 603,585 618,572 650,570 665,561 682,571 705,570 727,576 743,557 760,559 775,553 800,540 850,545 940,566 970,558 1000,561 1067,546 1098,533 1113,535 1130,525 1145,530 1205,537 1250,498 1270,496 1285,475 1330,507 1375,472 1390,468 1407,470 1423,500 1438,490 1454,511 1468,514 1485,507 1515,515`, YELLOW, fx, fundY);
    s += line(`31,291 60,278 80,284 95,280 120,287 145,283 170,287 185,263 203,257 215,235 235,210 249,183 263,185 293,210 310,200 325,199 345,208 370,216 388,240 418,232 433,259 449,236 465,233 482,224 497,227 510,240 526,266 557,277 573,273 588,265 603,268 618,293 635,300 650,297 665,318 682,305 727,296 743,319 760,315 775,320 805,345 833,346 865,353 882,361 940,353 1000,358 1020,369 1067,378 1083,400 1098,411 1113,407 1130,428 1145,420 1175,418 1190,450 1205,457 1220,478 1238,495 1252,530 1270,534 1285,565 1298,587 1313,560 1330,540 1345,547 1375,565 1407,566 1423,600 1437,598 1454,555 1470,575 1485,588 1498,592 1515,577`, "#149014", fx, fundY);
    s += `<text class="scale" x="15" y="1930" textLength="87">15.31</text>`;
    s += `<text class="scale" x="15" y="2115" textLength="108">-16.34</text>`;
    byId("fund").innerHTML = s;
}

function drawTicks() {
    let s = "";
    for (let i = 25; i < 97; i++) {
        const major = i === 45 || i === 96;
        s += `<path d="M${barX(i)} 2120v${major ? 15 : 9}" stroke="#666" stroke-width="${major ? 2.6 : 1.6}" opacity="${Math.min(1, (i - 24) / 8)}"/>`;
    }
    byId("ticks").innerHTML = s;
}

function drawChips() {
    let s = `<path d="M711 904.500H1050V1537H711z" fill="none" stroke="#c8c8c8" stroke-width="2"/>`;
    chips.forEach((w, i) => {
        if (!w) return;
        const y = priceY(43 + 10.04 * i);
        s += `<rect x="711" y="${y - 1.3}" width="${w / 3}" height="2.700" fill="${i < 3 ? "#6aa85a" : "#c95050"}"/>`;
        s += `<rect x="711" y="${y + 1.4}" width="${w / 3 - 1}" height="1.500" fill="${i < 3 ? "#c4e2bc" : "#f9b5b3"}"/>`;
    });
    s += `<circle cx="785" cy="1492" r="34" fill="#999" fill-opacity="0.130"/>`;
    s += `<path d="M779 1477l15 15-15 15" fill="none" stroke="#666" stroke-width="3"/>`;
    s += `<circle cx="962" cy="1492" r="34.500" fill="#fb8c50" fill-opacity="0.120"/>`;
    s += `<path d="M946 1490v-13h14M947 1478l12 11M977 1494v13h-14M976 1506l-12-11" fill="none" stroke="#d8591a" stroke-width="3.400"/>`;
    byId("chips").innerHTML = s;
}

drawKline();
drawVolume();
drawFund();
drawTicks();
drawChips();
```
